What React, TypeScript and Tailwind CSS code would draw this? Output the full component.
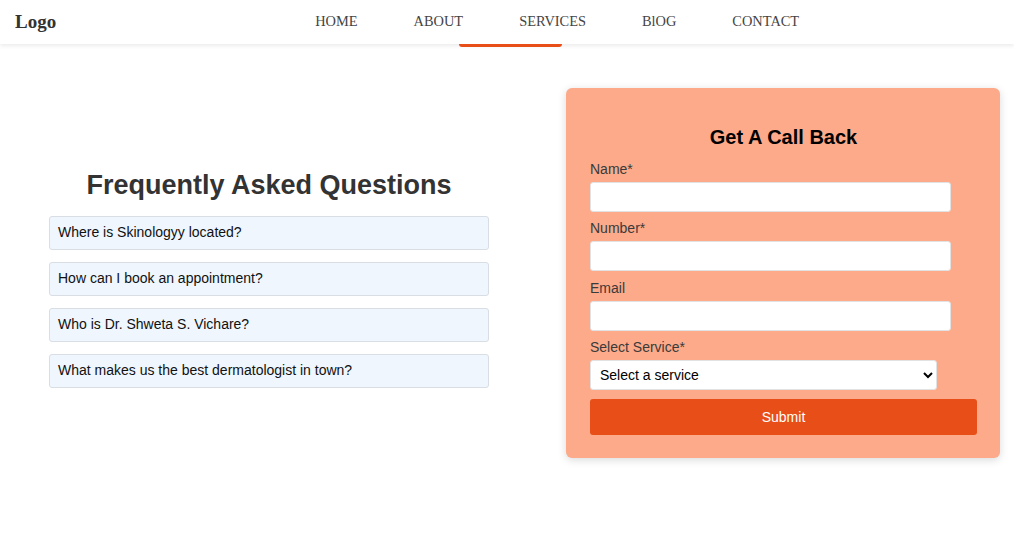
import React from "react";

const links = ["HOME", "ABOUT", "SERVICES", "BlOG", "CONTACT"];

const faqs = [
  "Where is Skinologyy located?",
  "How can I book an appointment?",
  "Who is Dr. Shweta S. Vichare?",
  "What makes us the best dermatologist in town?",
];

function Field({ label, gap = "mb-[9px]" }: { label: string; gap?: string }) {
  return (
    <div className={gap}>
      <label className="block text-[14px] leading-[16px] text-[#3a3a3a] mb-[4px] -mt-[1px] pb-[1px]">{label}</label>
      <input className="block w-[361px] h-[30px] bg-white border border-[#e2e2e2] rounded-[3px] px-2 text-[14px]" />
    </div>
  );
}

export default function App() {
  return (
    <div className="min-h-[535px] bg-white font-['Liberation_Sans',Arial,sans-serif]">
      {/* navbar */}
      <header className="relative h-[44px] bg-white shadow-[0_2px_4px_rgba(0,0,0,0.08)] flex items-center font-['Liberation_Serif','Times_New_Roman',serif]">
        <div className="ml-[15px] text-[19px] font-bold text-[#333]">Logo</div>
        <ul className="flex ml-[231px] -mt-[1px]">
          {links.map((l) => (
            <li key={l} className="px-7 text-[14.4px] text-[#444]">
              {l}
            </li>
          ))}
        </ul>
        <span className="absolute left-[459px] top-[44px] w-[103px] h-[3px] bg-[#e84e17] rounded-b-[3px]" />
      </header>

      <main className="flex items-start pt-[44px]">
        {/* FAQ */}
        <section className="ml-[49px] w-[440px] mt-[82px]">
          <h2 className="text-[27px] leading-[31px] font-bold text-[#333] text-center mb-[15px]">
            Frequently Asked Questions
          </h2>
          <div className="flex flex-col gap-[12px]">
            {faqs.map((q) => (
              <div
                key={q}
                className="h-[34px] flex items-center px-2 pb-[1px] bg-[#eff6fd] border border-[#d9dee4] rounded-[3px] text-[14px] text-[#111]"
              >
                {q}
              </div>
            ))}
          </div>
        </section>

        {/* call back form */}
        <section className="ml-[77px] w-[434px] bg-[#fcaa8a] rounded-[6px] shadow-[0_2px_8px_rgba(0,0,0,0.15)] pt-[38px] pb-[23px] pl-[24px] pr-[23px]">
          <h3 className="text-[20px] leading-[23px] font-bold text-black text-center mb-[13px]">Get A Call Back</h3>
          <Field label="Name*" />
          <Field label="Number*" gap="mb-[10px]" />
          <Field label="Email" />
          <div className="mb-[9px]">
            <label className="block text-[14px] leading-[16px] text-[#3a3a3a] mb-[4px] -mt-[1px] pb-[1px]">Select Service*</label>
            <select className="block w-[347px] h-[30px] bg-white border border-[#e2e2e2] rounded-[3px] pl-[5px] text-[14px] text-black">
              <option>Select a service</option>
              <option>Acne Treatment</option>
              <option>Hair Treatment</option>
            </select>
          </div>
          <button className="w-full h-[36px] bg-[#e84e17] rounded-[3px] text-white text-[14px]">Submit</button>
        </section>
      </main>
    </div>
  );
}
